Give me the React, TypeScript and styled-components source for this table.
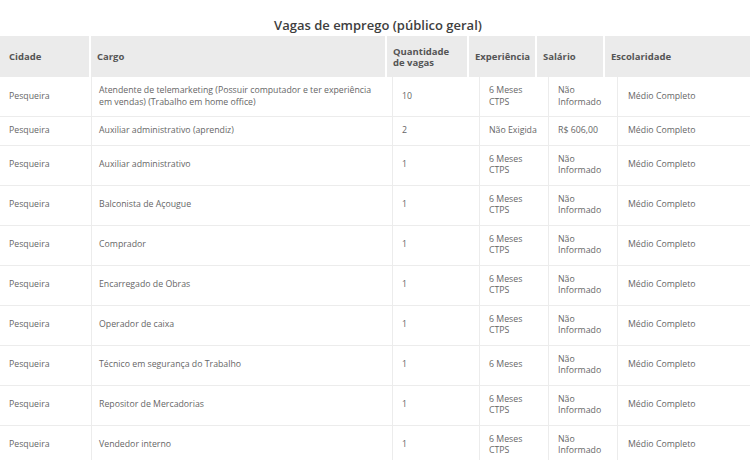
import React from 'react'
import styled, { createGlobalStyle } from 'styled-components'

type Vaga = {
  cidade: string
  cargo: string
  quantidade: string
  experiencia: string
  salario: string
  escolaridade: string
}

const vagas: Vaga[] = [
  {
    cidade: 'Pesqueira',
    cargo: 'Atendente de telemarketing (Possuir computador e ter experiência em vendas) (Trabalho em home office)',
    quantidade: '10',
    experiencia: '6 Meses CTPS',
    salario: 'Não Informado',
    escolaridade: 'Médio Completo',
  },
  {
    cidade: 'Pesqueira',
    cargo: 'Auxiliar administrativo (aprendiz)',
    quantidade: '2',
    experiencia: 'Não Exigida',
    salario: 'R$ 606,00',
    escolaridade: 'Médio Completo',
  },
  { cidade: 'Pesqueira', cargo: 'Auxiliar administrativo', quantidade: '1', experiencia: '6 Meses CTPS', salario: 'Não Informado', escolaridade: 'Médio Completo' },
  { cidade: 'Pesqueira', cargo: 'Balconista de Açougue', quantidade: '1', experiencia: '6 Meses CTPS', salario: 'Não Informado', escolaridade: 'Médio Completo' },
  { cidade: 'Pesqueira', cargo: 'Comprador', quantidade: '1', experiencia: '6 Meses CTPS', salario: 'Não Informado', escolaridade: 'Médio Completo' },
  { cidade: 'Pesqueira', cargo: 'Encarregado de Obras', quantidade: '1', experiencia: '6 Meses CTPS', salario: 'Não Informado', escolaridade: 'Médio Completo' },
  { cidade: 'Pesqueira', cargo: 'Operador de caixa', quantidade: '1', experiencia: '6 Meses CTPS', salario: 'Não Informado', escolaridade: 'Médio Completo' },
  { cidade: 'Pesqueira', cargo: 'Técnico em segurança do Trabalho', quantidade: '1', experiencia: '6 Meses', salario: 'Não Informado', escolaridade: 'Médio Completo' },
  { cidade: 'Pesqueira', cargo: 'Repositor de Mercadorias', quantidade: '1', experiencia: '6 Meses CTPS', salario: 'Não Informado', escolaridade: 'Médio Completo' },
  { cidade: 'Pesqueira', cargo: 'Vendedor interno', quantidade: '1', experiencia: '6 Meses CTPS', salario: 'Não Informado', escolaridade: 'Médio Completo' },
]

const GlobalStyle = createGlobalStyle`
  body {
    margin: 0;
    background: #fff;
    font-family: "Open Sans", "Liberation Sans", sans-serif;
    overflow: hidden;
  }
`

const Page = styled.div`
  width: 750px;
  padding-top: 17px;
`

const Title = styled.h2`
  margin: 0 0 2px;
  text-align: center;
  font-size: 13px;
  line-height: 17px;
  font-weight: 600;
  color: #3e3e3e;
  padding-left: 6px;
`

const HeaderRow = styled.div`
  display: grid;
  grid-template-columns: 89px 296px 82px 68px 68px 1fr;
  background: #ebebeb;
  height: 41px;
`

const HeaderCell = styled.div<{ $first?: boolean }>`
  display: flex;
  align-items: center;
  padding: 0 7px 0 ${(p) => (p.$first ? 9 : 6)}px;
  border-left: ${(p) => (p.$first ? 'none' : '2px solid #fff')};
  font-size: 9.5px;
  line-height: 11px;
  font-weight: 700;
  color: #555;
`

const BodyRow = styled.div<{ $tall?: boolean }>`
  display: grid;
  grid-template-columns: 91px 301px 87px 69px 69px 1fr;
  border-bottom: 1px solid #ececec;
`

const BodyCell = styled.div<{ $first?: boolean; $pad?: number }>`
  display: flex;
  align-items: center;
  padding: 8px 8px 8px ${(p) => p.$pad ?? 9}px;
  border-left: ${(p) => (p.$first ? 'none' : '1px solid #ececec')};
  font-size: 8.75px;
  line-height: 11.5px;
  font-weight: 400;
  color: #666;
`

const headers = ['Cidade', 'Cargo', 'Quantidade de vagas', 'Experiência', 'Salário', 'Escolaridade']

const App = () => {
  return (
    <>
      <GlobalStyle />
      <Page>
        <Title>Vagas de emprego (público geral)</Title>
        <HeaderRow>
          {headers.map((h, i) => (
            <HeaderCell key={h} $first={i === 0}>
              {h}
            </HeaderCell>
          ))}
        </HeaderRow>
        {vagas.map((v, i) => (
          <BodyRow key={i}>
            <BodyCell $first>{v.cidade}</BodyCell>
            <BodyCell $pad={7}>{v.cargo}</BodyCell>
            <BodyCell>{v.quantidade}</BodyCell>
            <BodyCell>{v.experiencia}</BodyCell>
            <BodyCell>{v.salario}</BodyCell>
            <BodyCell $pad={10}>{v.escolaridade}</BodyCell>
          </BodyRow>
        ))}
      </Page>
    </>
  )
}

export default App
